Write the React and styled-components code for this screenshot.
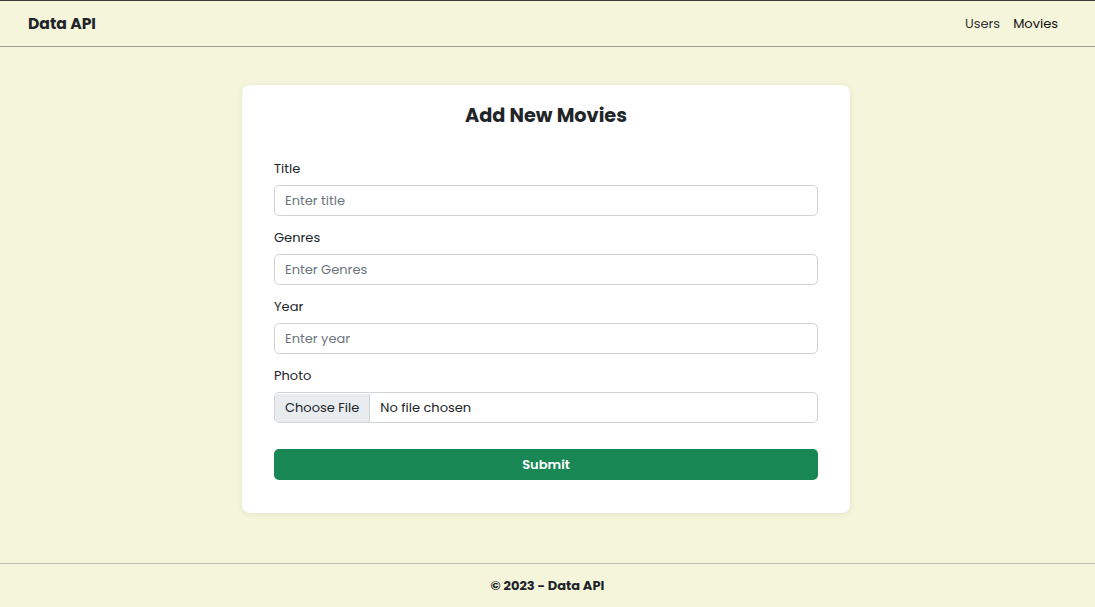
import React from 'react';
import styled, { createGlobalStyle } from 'styled-components';

const GlobalStyle = createGlobalStyle`
  * { box-sizing: border-box; }
  html, body { margin: 0; padding: 0; }
  body {
    font-family: "Poppins", "Inter", "Noto Sans", sans-serif;
    background: #f5f5dc;
    color: #212529;
  }
`;

const Page = styled.div`
  min-height: 607px;
  display: flex;
  flex-direction: column;
`;

const Header = styled.header`
  height: 47px;
  border-top: 1px solid #3a3a3a;
  border-bottom: 1px solid #9d9d90;
  display: flex;
  align-items: center;
  justify-content: space-between;
  padding: 0 37px 0 28px;
`;

const Brand = styled.a`
  font-size: 15.6px;
  font-weight: 700;
  color: #212529;
  text-decoration: none;
`;

const Nav = styled.nav`
  display: flex;
  gap: 13px;
`;

const NavLink = styled.a`
  font-size: 13px;
  color: ${(p) => (p.$active ? '#111' : '#333')};
  text-decoration: none;
`;

const Main = styled.main`
  flex: 1;
  display: flex;
  justify-content: center;
  align-items: flex-start;
  padding: 38px 3px 0 0;
`;

const Card = styled.form`
  width: 608px;
  background: #fff;
  border-radius: 8px;
  box-shadow: 0 1px 6px rgba(0, 0, 0, 0.08);
  padding: 17px 32px 33px;
`;

const Heading = styled.h3`
  margin: 0 0 29px;
  text-align: center;
  font-size: 19.3px;
  line-height: 28px;
  font-weight: 700;
`;

const Group = styled.div`
  margin-bottom: 12px;
`;

const Label = styled.label`
  display: block;
  font-size: 13px;
  line-height: 20px;
  margin-bottom: 6px;
`;

const Input = styled.input`
  display: block;
  width: 100%;
  height: 31px;
  border: 1px solid #ced4da;
  border-radius: 5px;
  padding: 0 10px;
  font-family: inherit;
  font-size: 13px;
  color: #212529;
  background: #fff;
  &::placeholder { color: #6c757d; }
  &::file-selector-button {
    height: 29px;
    margin: 0 10px 0 -10px;
    padding: 0 10px;
    border: 0;
    border-right: 1px solid #ced4da;
    background: #e9ecef;
    font-family: inherit;
    font-size: 13px;
    color: #212529;
  }
`;

const FileInput = styled(Input)`
  line-height: 29px;
  overflow: hidden;
`;

const Submit = styled.button`
  display: block;
  width: 100%;
  height: 31px;
  margin-top: 26px;
  border: 0;
  border-radius: 5px;
  background: #198754;
  color: #fff;
  font-family: inherit;
  font-size: 13px;
  font-weight: 600;
`;

const Footer = styled.footer`
  height: 44px;
  border-top: 1px solid #bdbdae;
  display: flex;
  align-items: center;
  justify-content: center;
  font-size: 13px;
  font-weight: 700;
`;

const fields = [
  { label: 'Title', placeholder: 'Enter title' },
  { label: 'Genres', placeholder: 'Enter Genres' },
  { label: 'Year', placeholder: 'Enter year' },
];

export default function App() {
  return (
    <>
      <GlobalStyle />
      <Page>
        <Header>
          <Brand href="#">Data API</Brand>
          <Nav>
            <NavLink href="#">Users</NavLink>
            <NavLink href="#" $active>Movies</NavLink>
          </Nav>
        </Header>
        <Main>
          <Card onSubmit={(e) => e.preventDefault()}>
            <Heading>Add New Movies</Heading>
            {fields.map((f) => (
              <Group key={f.label}>
                <Label>{f.label}</Label>
                <Input type="text" placeholder={f.placeholder} />
              </Group>
            ))}
            <Group>
              <Label>Photo</Label>
              <FileInput type="file" />
            </Group>
            <Submit type="submit">Submit</Submit>
          </Card>
        </Main>
        <Footer>© 2023 - Data API</Footer>
      </Page>
    </>
  );
}
